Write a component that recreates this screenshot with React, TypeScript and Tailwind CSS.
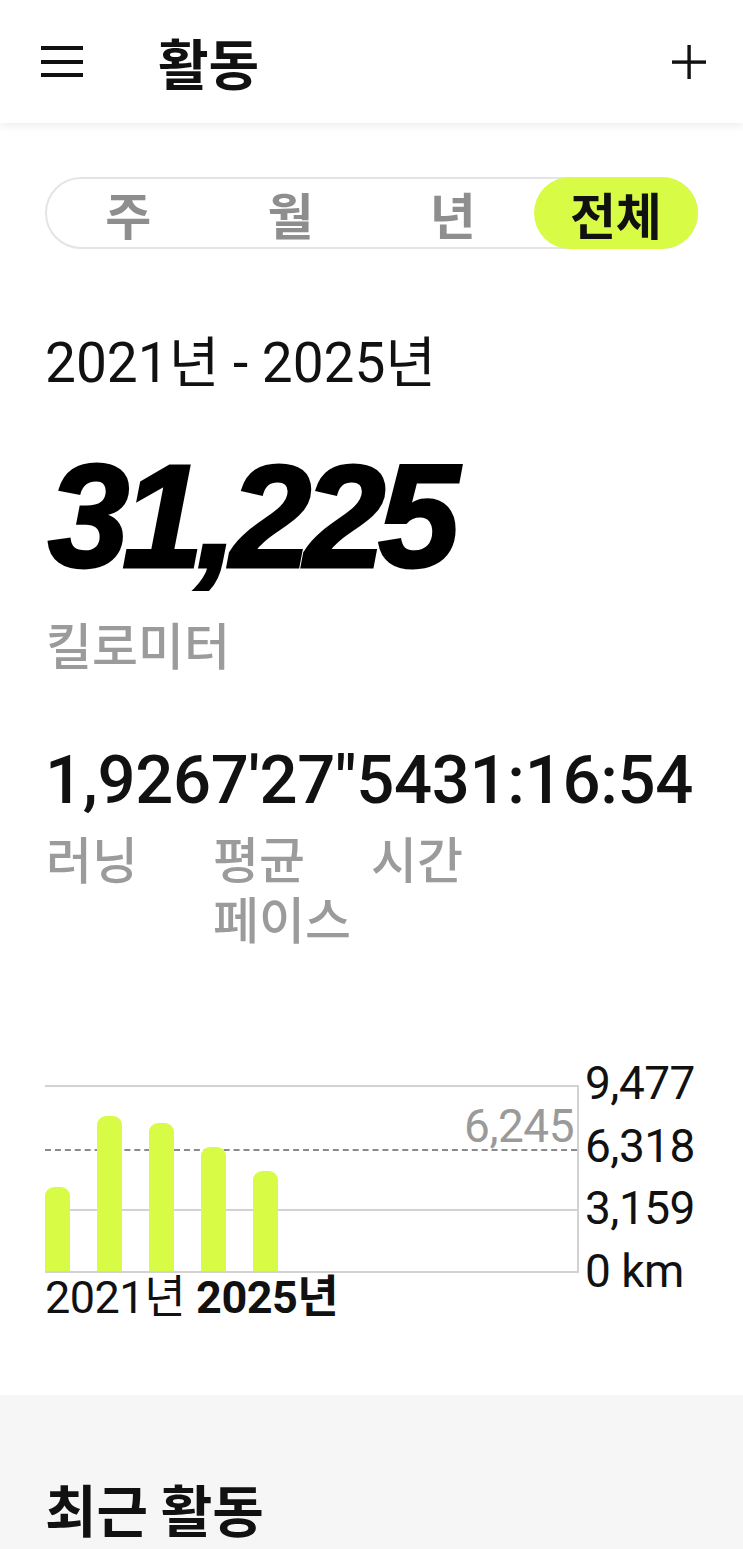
import type { CSSProperties } from 'react';

const KR = "font-['Noto_Sans_CJK_KR',sans-serif]";
const NUM = "font-['Roboto','Noto_Sans_CJK_KR',sans-serif]";

const tabs = ['주', '월', '년', '전체'];
const yearly = [4257, 7906, 7551, 6335, 5118];
const MAX = 9477;
const PLOT_H = 186;

const stats = [
  { value: '1,926', label: '러닝', w: 'w-[167px]' },
  { value: '7\'27"', label: '평균 페이스', w: 'w-[158px]' },
  { value: '5431:16:54', label: '시간', w: '' },
];

function MenuIcon() {
  return (
    <svg width="42" height="32" viewBox="0 0 42 32" aria-hidden>
      <rect x="0" y="0" width="42" height="4" fill="#111" />
      <rect x="0" y="14" width="42" height="4" fill="#111" />
      <rect x="0" y="27" width="42" height="4" fill="#111" />
    </svg>
  );
}

function PlusIcon() {
  return (
    <svg width="34" height="34" viewBox="0 0 34 34" aria-hidden>
      <rect x="15.4" y="0" width="3.4" height="34" fill="#111" />
      <rect x="0" y="15.4" width="34" height="3.4" fill="#111" />
    </svg>
  );
}

function Chart() {
  return (
    <div className="mt-[138px] flex items-start pl-[45px]">
      <div className="flex flex-col">
        <div className="relative flex h-[188px] w-[534px] items-end gap-[27px] border-y-2 border-r-2 border-[#d2d2d2]">
          <div className="absolute left-0 right-0 top-[122px] h-[2px] bg-[#d2d2d2]" />
          <div className="absolute left-0 right-0 top-[62px] border-t-2 border-dashed border-[#8a8a8a]" />
          <div className={`absolute right-[3px] top-[16px] text-[46px] leading-none tracking-[-0.5px] text-[#9a9a9a] ${NUM}`}>6,245</div>
          {yearly.map((v, i) => {
            const style: CSSProperties = { height: `${Math.round((v / MAX) * PLOT_H)}px` };
            return <div key={i} className="relative w-[25px] rounded-t-[9px] bg-[#d8fc45]" style={style} />;
          })}
        </div>
        <div className={`mt-[2px] flex text-[45px] leading-none tracking-[-0.5px] text-[#111] ${NUM}`}>
          <span>2021년</span>
          <span className="ml-[11px] font-bold">2025년</span>
        </div>
      </div>
      <div className={`-mt-[33px] ml-[6px] flex flex-col text-[46px] leading-none tracking-[-0.5px] text-[#111] ${NUM}`}>
        {['9,477', '6,318', '3,159', '0 km'].map((t) => (
          <div key={t} className="flex h-[62.5px] items-center">{t}</div>
        ))}
      </div>
    </div>
  );
}

export default function App() {
  return (
    <div className="flex min-h-[1549px] w-[743px] flex-col bg-white">
      <header className="relative z-10 flex h-[123px] shrink-0 items-center bg-white shadow-[0_3px_8px_rgba(0,0,0,0.07)]">
        <div className="ml-[41px] flex">
          <MenuIcon />
        </div>
        <h1 className={`ml-[75px] text-[55px] font-bold leading-none text-[#111] ${KR}`}>활동</h1>
        <div className="ml-auto mr-[37px] flex">
          <PlusIcon />
        </div>
      </header>

      <div className="mx-[45px] mt-[54px] grid h-[72px] grid-cols-4 rounded-full border-2 border-[#e4e4e4]">
        {tabs.map((t) => {
          const active = t === '전체';
          return (
            <div
              key={t}
              className={`flex items-center justify-center rounded-full text-[50px] font-bold leading-none ${KR} ${
                active ? '-my-[2px] -mr-[2px] bg-[#d8fc45] text-[#111]' : 'text-[#8e8e8e]'
              }`}
            >
              {t}
            </div>
          );
        })}
      </div>

      <div className={`ml-[45px] mt-[81px] text-[55px] leading-[1.2] text-[#111] ${NUM}`}>
        2021년 - 2025년
      </div>

      <div className="ml-[48px] mt-[48px] font-['Liberation_Sans',sans-serif] text-[146px] font-bold italic leading-none tracking-[-7px] text-black [-webkit-text-stroke:3px_black]">
        31,225
      </div>

      <div className={`ml-[46px] mt-[28px] text-[50px] font-medium leading-none text-[#9b9b9b] ${KR}`}>킬로미터</div>

      <div className={`ml-[45px] mt-[79px] whitespace-nowrap text-[67px] font-medium leading-none tracking-[-0.3px] text-[#111] ${NUM}`}>
        {stats.map((s) => (
          <span key={s.label}>{s.value}</span>
        ))}
      </div>

      <div className={`ml-[46px] mt-[13px] flex text-[50px] font-medium leading-[60px] text-[#9b9b9b] [word-break:keep-all] ${KR}`}>
        {stats.map((s) => (
          <div key={s.label} className={s.w}>
            {s.label}
          </div>
        ))}
      </div>

      <Chart />

      <section className="mt-[75px] flex-1 bg-[#f6f6f6] pl-[45px] pt-[85px]">
        <h2 className={`text-[56px] font-bold leading-none text-[#111] ${KR}`}>최근 활동</h2>
      </section>
    </div>
  );
}
